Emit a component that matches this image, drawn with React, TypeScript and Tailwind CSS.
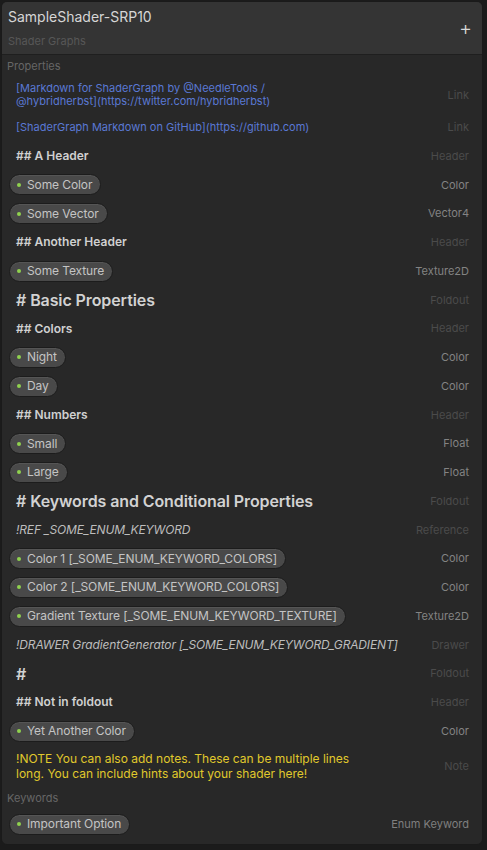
import React from 'react';

type Kind = 'link' | 'h2' | 'h1' | 'pill' | 'italic';

interface Row {
  kind: Kind;
  text: string;
  type: string;
}

const rows: Row[] = [
  { kind: 'link', text: '[ShaderGraph Markdown on GitHub](https://github.com)', type: 'Link' },
  { kind: 'h2', text: '## A Header', type: 'Header' },
  { kind: 'pill', text: 'Some Color', type: 'Color' },
  { kind: 'pill', text: 'Some Vector', type: 'Vector4' },
  { kind: 'h2', text: '## Another Header', type: 'Header' },
  { kind: 'pill', text: 'Some Texture', type: 'Texture2D' },
  { kind: 'h1', text: '# Basic Properties', type: 'Foldout' },
  { kind: 'h2', text: '## Colors', type: 'Header' },
  { kind: 'pill', text: 'Night', type: 'Color' },
  { kind: 'pill', text: 'Day', type: 'Color' },
  { kind: 'h2', text: '## Numbers', type: 'Header' },
  { kind: 'pill', text: 'Small', type: 'Float' },
  { kind: 'pill', text: 'Large', type: 'Float' },
  { kind: 'h1', text: '# Keywords and Conditional Properties', type: 'Foldout' },
  { kind: 'italic', text: '!REF _SOME_ENUM_KEYWORD', type: 'Reference' },
  { kind: 'pill', text: 'Color 1 [_SOME_ENUM_KEYWORD_COLORS]', type: 'Color' },
  { kind: 'pill', text: 'Color 2 [_SOME_ENUM_KEYWORD_COLORS]', type: 'Color' },
  { kind: 'pill', text: 'Gradient Texture [_SOME_ENUM_KEYWORD_TEXTURE]', type: 'Texture2D' },
  { kind: 'italic', text: '!DRAWER GradientGenerator [_SOME_ENUM_KEYWORD_GRADIENT]', type: 'Drawer' },
  { kind: 'h1', text: '#', type: 'Foldout' },
  { kind: 'h2', text: '## Not in foldout', type: 'Header' },
  { kind: 'pill', text: 'Yet Another Color', type: 'Color' },
];

const Pill = ({ text }: { text: string }) => (
  <div className="flex items-center h-[21px] pl-[7px] pr-[8px] rounded-full bg-[#494949] border border-[#1c1c1c] shadow-[inset_0_1px_0_#555]">
    <span className="w-[4px] h-[4px] rounded-full bg-[#8fd14f] mr-[6px]" />
    <span className="text-[12px] tracking-[-0.1px] text-[#c4c4c4] whitespace-nowrap">{text}</span>
  </div>
);

const TypeLabel = ({ type, bright }: { type: string; bright: boolean }) => (
  <span className={`text-[11px] whitespace-nowrap ${bright ? 'text-[#838383]' : 'text-[#4b4b4b]'}`}>{type}</span>
);

const PropertyRow = ({ row }: { row: Row }) => {
  let left: React.ReactNode;
  if (row.kind === 'pill') left = <div className="pl-[7px]"><Pill text={row.text} /></div>;
  else if (row.kind === 'link') left = <span className="pl-[14px] text-[11px] text-[#5a78d4]">{row.text}</span>;
  else if (row.kind === 'h2') left = <span className="pl-[14px] text-[12px] font-semibold text-[#d0d0d0]">{row.text}</span>;
  else if (row.kind === 'h1') left = <span className="pl-[14px] text-[16px] tracking-[-0.1px] font-semibold text-[#d2d2d2]">{row.text}</span>;
  else left = <span className="pl-[14px] text-[12px] tracking-[-0.15px] italic text-[#bdbdbd] whitespace-nowrap">{row.text}</span>;

  return (
    <div className="flex items-center justify-between h-[28.75px] pr-[13px]">
      {left}
      <TypeLabel type={row.type} bright={row.kind === 'pill'} />
    </div>
  );
};

const App: React.FC = () => {
  return (
    <div className="w-[487px] h-[850px] bg-[#1b1b1b] font-['Inter','Noto_Sans',sans-serif] pt-[1px] pl-[1px]">
      <div className="w-[482px] h-[844px] rounded-[6px] bg-[#282828] border border-[#1a1a1a] overflow-hidden flex flex-col">
        <div className="h-[53px] bg-[#343434] border-b border-[#1f1f1f] flex items-center justify-between pl-[6px] pr-[10px]">
          <div className="flex flex-col">
            <span className="text-[14px] text-[#d6d6d6] leading-[18px]">SampleShader-SRP10</span>
            <span className="text-[11px] text-[#575757] leading-[14px] mt-[8px]">Shader Graphs</span>
          </div>
          <span className="text-[20px] text-[#d8d8d8] leading-none font-light">+</span>
        </div>

        <div className="h-[22px] flex items-center pl-[5px] text-[11px] text-[#666666]">Properties</div>

        <div className="flex items-center justify-between h-[36px] pr-[13px]">
          <span className="pl-[14px] text-[11px] leading-[13px] text-[#5a78d4] w-[300px]">
            [Markdown for ShaderGraph by @NeedleTools / @hybridherbst](https://twitter.com/hybridherbst)
          </span>
          <TypeLabel type="Link" bright={false} />
        </div>

        {rows.map((row, i) => (
          <PropertyRow key={i} row={row} />
        ))}

        <div className="flex items-center justify-between h-[41px] pr-[13px]">
          <span className="pl-[14px] text-[12px] leading-[15px] text-[#e0c92c] w-[355px]">
            !NOTE You can also add notes. These can be multiple lines long. You can include hints about your shader here!
          </span>
          <TypeLabel type="Note" bright={false} />
        </div>

        <div className="h-[23px] flex items-center pl-[5px] text-[11px] text-[#666666]">Keywords</div>

        <div className="flex items-center justify-between h-[29px] pr-[13px]">
          <div className="pl-[7px]"><Pill text="Important Option" /></div>
          <span className="text-[11px] text-[#7f7f7f]">Enum Keyword</span>
        </div>
      </div>
    </div>
  );
};

export default App;
